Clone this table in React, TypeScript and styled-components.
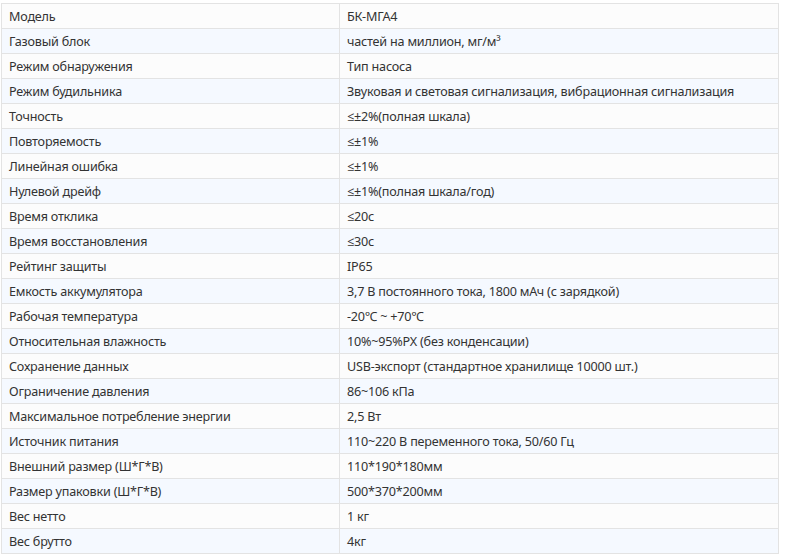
import React from "react";
import styled, { createGlobalStyle } from "styled-components";

const rows: [string, string][] = [
  ["Модель", "БК-МГА4"],
  ["Газовый блок", "частей на миллион, мг/м³"],
  ["Режим обнаружения", "Тип насоса"],
  ["Режим будильника", "Звуковая и световая сигнализация, вибрационная сигнализация"],
  ["Точность", "≤±2%(полная шкала)"],
  ["Повторяемость", "≤±1%"],
  ["Линейная ошибка", "≤±1%"],
  ["Нулевой дрейф", "≤±1%(полная шкала/год)"],
  ["Время отклика", "≤20с"],
  ["Время восстановления", "≤30с"],
  ["Рейтинг защиты", "IP65"],
  ["Емкость аккумулятора", "3,7 В постоянного тока, 1800 мАч (с зарядкой)"],
  ["Рабочая температура", "-20℃ ~ +70℃"],
  ["Относительная влажность", "10%~95%РХ (без конденсации)"],
  ["Сохранение данных", "USB-экспорт (стандартное хранилище 10000 шт.)"],
  ["Ограничение давления", "86~106 кПа"],
  ["Максимальное потребление энергии", "2,5 Вт"],
  ["Источник питания", "110~220 В переменного тока, 50/60 Гц"],
  ["Внешний размер (Ш*Г*В)", "110*190*180мм"],
  ["Размер упаковки (Ш*Г*В)", "500*370*200мм"],
  ["Вес нетто", "1 кг"],
  ["Вес брутто", "4кг"],
];

const GlobalStyle = createGlobalStyle`
  body {
    margin: 0;
    background: #ffffff;
    font-family: "Noto Sans", "Open Sans", sans-serif;
  }
`;

const Page = styled.div`
  padding: 3px 0 0 1px;
`;

const Table = styled.table`
  width: 778px;
  border-collapse: collapse;
  table-layout: fixed;
`;

const Row = styled.tr<{ $alt: boolean }>`
  height: 25px;
  background: ${(p) => (p.$alt ? "#f5f9ff" : "#fcfcfc")};
`;

const Cell = styled.td<{ $w?: number }>`
  width: ${(p) => (p.$w ? `${p.$w}px` : "auto")};
  padding: 2px 7px 0;
  border: 1px solid #e3e3e3;
  font-size: 12.6px;
  letter-spacing: -0.2px;
  color: #333333;
  line-height: 22px;
  white-space: nowrap;
  box-sizing: border-box;
`;

export default function App() {
  return (
    <Page>
      <GlobalStyle />
      <Table>
        <tbody>
          {rows.map(([k, v], i) => (
            <Row key={k} $alt={i % 2 === 1}>
              <Cell $w={338}>{k}</Cell>
              <Cell>{v}</Cell>
            </Row>
          ))}
        </tbody>
      </Table>
    </Page>
  );
}
